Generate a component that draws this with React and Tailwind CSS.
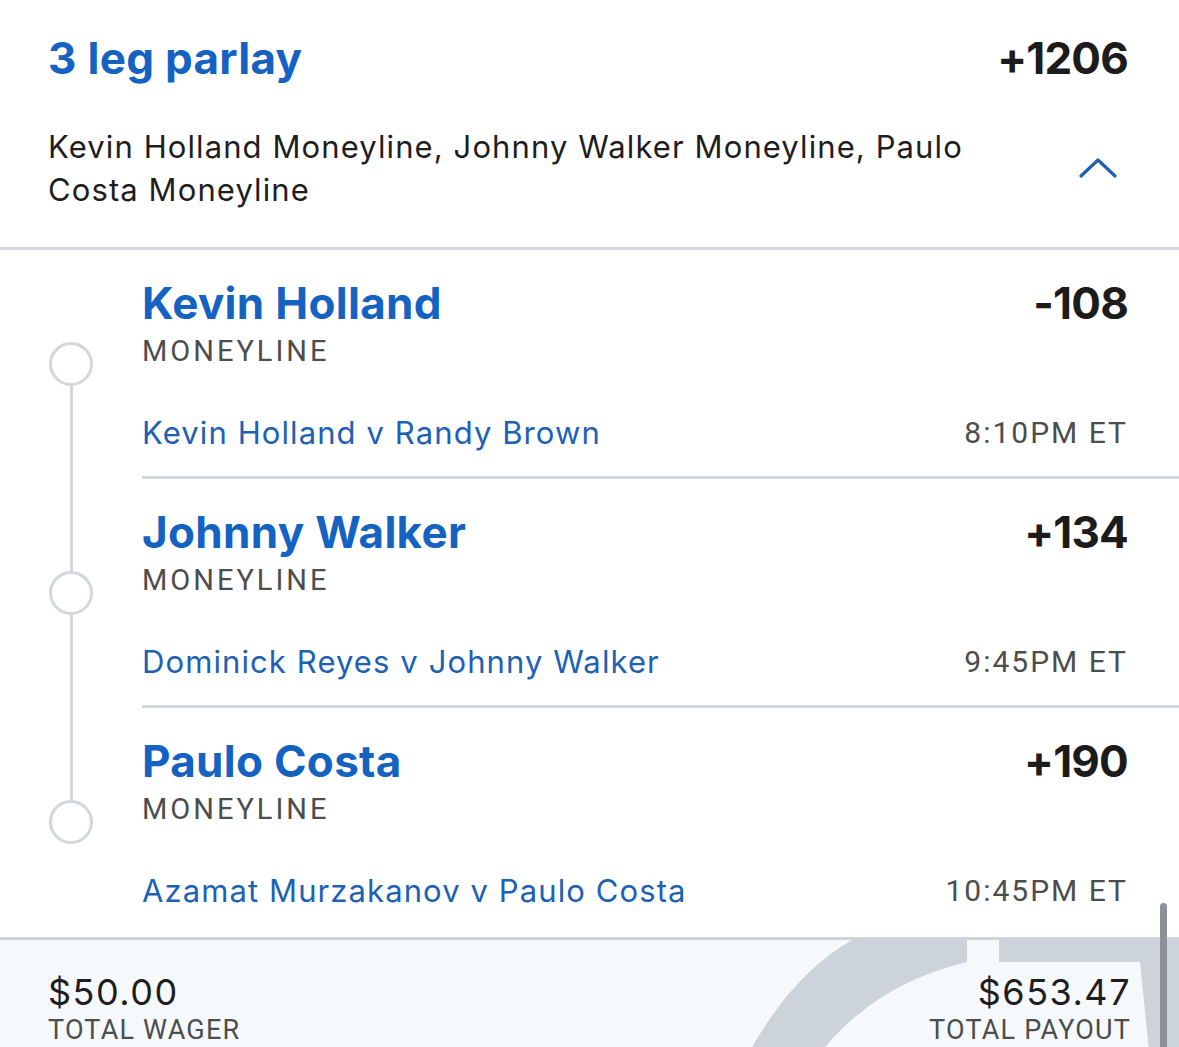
import React from "react";

const legs = [
  { name: "Kevin Holland", odds: "-108", match: "Kevin Holland v Randy Brown", time: "8:10PM ET" },
  { name: "Johnny Walker", odds: "+134", match: "Dominick Reyes v Johnny Walker", time: "9:45PM ET" },
  { name: "Paulo Costa", odds: "+190", match: "Azamat Murzakanov v Paulo Costa", time: "10:45PM ET" },
];

function Leg({ leg, index, last }) {
  return (
    <div className="flex h-[229px]">
      <div className="w-[142px] flex-none flex flex-col items-center">
        <div className="w-[140px] flex flex-col items-center h-full">
          <div className={`w-[3px] h-[92px] ${index === 0 ? "bg-transparent" : "bg-[#d3d6db]"}`} />
          <div className="w-[44px] h-[44px] rounded-full border-[3px] border-[#d3d6db] flex-none" />
          <div className={`w-[3px] flex-1 ${last ? "bg-transparent" : "bg-[#d3d6db]"}`} />
        </div>
      </div>
      <div className={`flex-1 flex flex-col pr-[51px] ${last ? "" : "border-b-[3px] border-[#d3d6db]"}`}>
        <div className="flex justify-between items-start pt-[27px]">
          <div className="text-[44px] leading-[52px] font-bold text-[#1462c2] tracking-[0.3px]">{leg.name}</div>
          <div className="text-[44px] leading-[52px] font-bold text-[#1c1c1c] tracking-[-0.8px]">{leg.odds}</div>
        </div>
        <div className="text-[29px] leading-[34px] text-[#4d4d4d] tracking-[3px] font-['Roboto',sans-serif] mt-[5px]">MONEYLINE</div>
        <div className="flex justify-between items-center mt-[45px]">
          <div className="text-[31px] leading-[40px] text-[#1d61b4] tracking-[1.1px]">{leg.match}</div>
          <div className="text-[30px] leading-[40px] text-[#4d4d4d] tracking-[2px] font-['Roboto',sans-serif]">{leg.time}</div>
        </div>
      </div>
    </div>
  );
}

export default function App() {
  return (
    <div className="w-[1179px] h-[1047px] overflow-hidden bg-white relative font-['Inter',sans-serif]">
      <div className="pl-[48px] pr-[51px] pt-[28px]">
        <div className="flex justify-between items-start">
          <div className="text-[44px] leading-[60px] font-bold text-[#1462c2] tracking-[0.3px]">3 leg parlay</div>
          <div className="text-[44px] leading-[60px] font-bold text-[#1c1c1c] tracking-[-0.8px]">+1206</div>
        </div>
        <div className="flex items-center justify-between mt-[37px] pb-[36px]">
          <div className="text-[31px] leading-[43px] text-[#1e1e1e] tracking-[1.1px] w-[960px]">
            Kevin Holland Moneyline, Johnny Walker Moneyline, Paulo Costa Moneyline
          </div>
          <svg width="40" height="24" viewBox="0 0 40 24" className="mr-[10px]">
            <path d="M3 20 L20 4 L37 20" fill="none" stroke="#1d61b4" strokeWidth="3.2" strokeLinecap="round" strokeLinejoin="round" />
          </svg>
        </div>
      </div>
      <div className="h-[3px] bg-[#d3d6db]" />
      {legs.map((leg, i) => (
        <Leg key={i} leg={leg} index={i} last={i === legs.length - 1} />
      ))}
      <div className="relative border-t-[3px] border-[#cfd4da] bg-[#f6f9fc] h-[120px]">
        <svg className="absolute left-0 top-0" width="1179" height="120" viewBox="0 0 1179 120">
          <path d="M745 120 Q790 35 852 0 L1179 0 L1179 120 Z" fill="#ccd3da" />
          <path d="M815 120 Q870 45 967 22 L967 0 L999 0 L999 22 L1140 22 L1150 120 Z" fill="#f6f9fc" />
        </svg>
        <div className="relative flex justify-between pl-[48px] pr-[49px] pt-[30px]">
          <div className="flex flex-col">
            <div className="text-[36px] leading-[44px] text-[#1e1e1e] tracking-[1.5px]">$50.00</div>
            <div className="text-[27px] leading-[32px] text-[#4d4d4d] tracking-[1.2px] font-['Roboto',sans-serif]">TOTAL WAGER</div>
          </div>
          <div className="flex flex-col items-end">
            <div className="text-[36px] leading-[44px] text-[#1e1e1e] tracking-[1.5px] mr-[-1px]">$653.47</div>
            <div className="text-[27px] leading-[32px] text-[#4d4d4d] tracking-[1.2px] font-['Roboto',sans-serif] mr-[-1px]">TOTAL PAYOUT</div>
          </div>
        </div>
      </div>
      <div className="absolute left-[1160px] top-[903px] w-[7px] h-[160px] rounded-full bg-[#8c9097]" />
    </div>
  );
}
